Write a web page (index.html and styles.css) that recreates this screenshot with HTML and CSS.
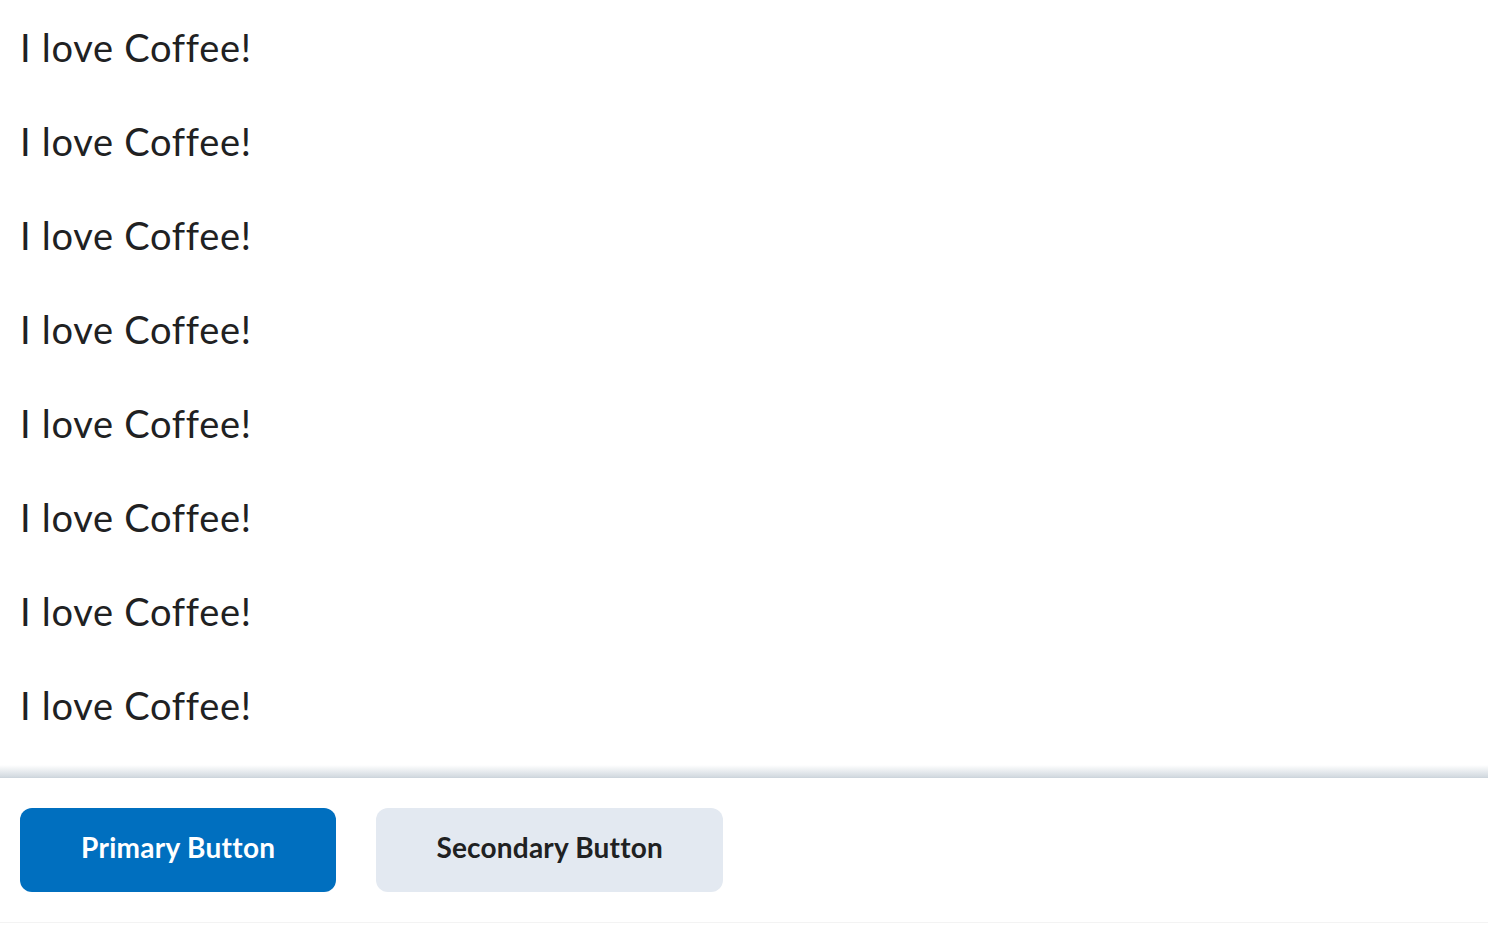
FILE: index.html
```html
<!DOCTYPE html>
<html>
<head>
<meta charset="utf-8">
<link rel="stylesheet" href="styles.css">
</head>
<body>
<div class="dialog">
  <div class="content">
    <p class="line">I love Coffee!</p>
    <p class="line">I love Coffee!</p>
    <p class="line">I love Coffee!</p>
    <p class="line">I love Coffee!</p>
    <p class="line">I love Coffee!</p>
    <p class="line">I love Coffee!</p>
    <p class="line">I love Coffee!</p>
    <p class="line">I love Coffee!</p>
  </div>
  <div class="footer">
    <button class="btn btn-primary">Primary Button</button>
    <button class="btn btn-secondary">Secondary Button</button>
  </div>
</div>
</body>
</html>
```

FILE: styles.css
```css
html, body {
  margin: 0;
  padding: 0;
  background: #ffffff;
}

body {
  font-family: Lato, "Noto Sans", sans-serif;
  color: #202122;
}

.dialog {
  display: flex;
  flex-direction: column;
  height: 942px;
}

.content {
  height: 777px;
  box-sizing: border-box;
  padding: 19px 20px 0 20px;
  display: flex;
  flex-direction: column;
  gap: 38px;
  overflow: hidden;
  position: relative;
}

.content::after {
  content: "";
  position: absolute;
  left: 0;
  right: 0;
  bottom: 0;
  height: 12px;
  background: linear-gradient(to bottom, rgba(205, 213, 220, 0), rgba(205, 213, 220, 0.9));
}

.line {
  margin: 0;
  font-size: 38px;
  line-height: 56px;
  font-weight: 400;
  letter-spacing: 0.72px;
}

.footer {
  border-top: 1px solid #cdd5dc;
  border-bottom: 1px solid #f3f3f3;
  padding: 30px 20px;
  display: flex;
  gap: 40px;
  align-items: center;
}

.btn {
  font-family: Lato, "Noto Sans", sans-serif;
  font-size: 28px;
  font-weight: 700;
  height: 84px;
  border: none;
  border-radius: 12px;
  cursor: pointer;
}

.btn-primary {
  background: #006fbf;
  color: #ffffff;
  letter-spacing: 0.3px;
  padding: 0 61px 6px 61px;
}

.btn-secondary {
  background: #e3e9f1;
  color: #202122;
  letter-spacing: 0.2px;
  padding: 0 60px 6px 60px;
}
```
